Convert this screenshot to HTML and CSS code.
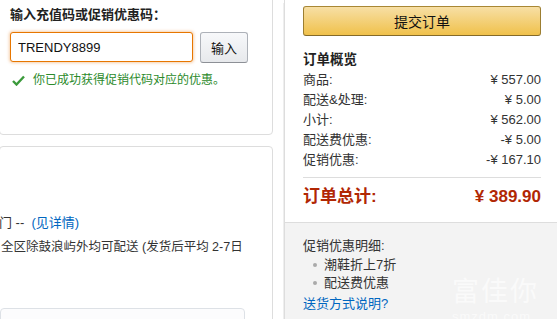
FILE: index.html
```html
<!DOCTYPE html>
<html lang="zh-CN">
<head>
  <meta charset="UTF-8" />
  <title>结算 - 提交订单</title>
  <link rel="stylesheet" href="styles.css">
</head>
<body>
  <div class="page">
    <div class="left-col">
      <div class="box promo-box">
        <div class="promo-title">输入充值码或促销优惠码：</div>
        <div class="promo-row">
          <input type="text" class="promo-input" value="TRENDY8899" />
          <button class="btn-grey">输入</button>
        </div>
        <div class="promo-ok">
          <svg class="check" width="13" height="11" viewBox="0 0 13 11">
            <path d="M1 6 L4.5 9.5 L12 1.5" fill="none" stroke="#3b9a3b" stroke-width="2.4" />
          </svg>
          你已成功获得促销代码对应的优惠。
        </div>
      </div>

      <div class="box ship-box">
        <div class="ship-line">厦门 -- &nbsp;<a href="#" class="link">(见详情)</a></div>
        <div class="ship-line ship-line2">全区除鼓浪屿外均可配送 (发货后平均 2-7日</div>
        <div class="inner-box"></div>
      </div>
    </div>

    <div class="right-col">
      <div class="summary">
        <button class="btn-submit">提交订单</button>
        <div class="sum-title">订单概览</div>
        <div class="sum-row"><span>商品:</span><span>¥ 557.00</span></div>
        <div class="sum-row"><span>配送&amp;处理:</span><span>¥ 5.00</span></div>
        <div class="sum-row"><span>小计:</span><span>¥ 562.00</span></div>
        <div class="sum-row"><span>配送费优惠:</span><span>-¥ 5.00</span></div>
        <div class="sum-row"><span>促销优惠:</span><span>-¥ 167.10</span></div>
        <div class="sum-total"><span>订单总计:</span><span>¥ 389.90</span></div>
      </div>
      <div class="promo-detail">
        <div>促销优惠明细:</div>
        <ul>
          <li>潮鞋折上7折</li>
          <li>配送费优惠</li>
        </ul>
        <a href="#" class="link">送货方式说明?</a>
        <div class="watermark">富佳你<small>smzdm.com</small></div>
      </div>
    </div>
  </div>
</body>
</html>
```

FILE: styles.css
```css
body {
  margin: 0;
  padding: 0;
  background-color: #ffffff;
  font-family: "Liberation Sans", "Noto Sans CJK SC", sans-serif;
  font-size: 13px;
  color: #333;
  overflow: hidden;
}

.page {
  display: flex;
  width: 580px;
}

.left-col {
  width: 274px;
  margin-left: -1px;
  margin-top: -1px;
  flex-shrink: 0;
}

.box {
  border: 1px solid #ddd;
  border-radius: 4px;
  background-color: #fff;
}

.promo-box {
  padding: 5px 10px 44px 10px;
  border-top-left-radius: 0;
  border-top-right-radius: 0;
}

.promo-title {
  font-weight: bold;
  line-height: 20px;
  color: #222;
}

.promo-row {
  display: flex;
  gap: 7px;
  margin-top: 7px;
}

.promo-input {
  width: 183px;
  height: 30px;
  box-sizing: border-box;
  border: 1px solid #e77600;
  border-radius: 3px;
  box-shadow: 0 0 3px 1px rgba(228, 121, 17, 0.35);
  padding: 0 7px;
  font-family: "Liberation Sans", sans-serif;
  font-size: 13px;
  color: #111;
  text-decoration: underline wavy #e03030;
  text-decoration-thickness: 1px;
  text-underline-offset: 3px;
  outline: none;
}

.btn-grey {
  width: 48px;
  height: 31px;
  border: 1px solid #adb1b8;
  border-bottom-color: #8d9096;
  border-radius: 3px;
  background: linear-gradient(#f7f8fa, #e7e9ec);
  font-family: "Liberation Sans", "Noto Sans CJK SC", sans-serif;
  font-size: 13px;
  color: #111;
  padding: 0;
}

.promo-ok {
  display: flex;
  align-items: center;
  gap: 8px;
  margin-top: 7px;
  padding-left: 2px;
  line-height: 20px;
  font-size: 12px;
  color: #2b8a2b;
}

.ship-box {
  margin-top: 11px;
  padding-top: 63px;
  height: 300px;
  overflow: hidden;
}

.ship-line {
  line-height: 25px;
  white-space: nowrap;
  margin-left: -14px;
  color: #333;
}

.ship-line2 {
  margin-left: 1px;
  font-size: 12.5px;
}

.link {
  color: #0066c0;
  text-decoration: none;
}

.inner-box {
  margin-top: 48px;
  width: 243px;
  height: 40px;
  border: 1px solid #dde1e6;
  border-radius: 4px;
  background-color: #fcfcfd;
}

.right-col {
  width: 274px;
  margin-left: 11px;
  border-left: 1px solid #ddd;
  box-shadow: -4px 0 0 -3px #eee;
  flex-shrink: 0;
  height: 330px;
  display: flex;
  flex-direction: column;
}

.summary {
  padding: 6px 18px 12px 18px;
}

.btn-submit {
  width: 100%;
  height: 30px;
  border: 1px solid #a88734;
  border-color: #a88734 #9c7e31 #846a29;
  border-radius: 3px;
  background: linear-gradient(#f7dfa5, #f0c14b);
  font-family: "Liberation Sans", "Noto Sans CJK SC", sans-serif;
  font-size: 14px;
  color: #111;
}

.sum-title {
  margin-top: 14px;
  line-height: 20px;
  font-weight: bold;
  font-size: 13.5px;
  color: #222;
}

.sum-row {
  display: flex;
  justify-content: space-between;
  line-height: 20px;
  color: #333;
}

.sum-total {
  display: flex;
  justify-content: space-between;
  margin-top: 7px;
  padding-top: 6px;
  border-top: 1px solid #ddd;
  line-height: 26px;
  font-size: 17px;
  font-weight: bold;
  color: #b12704;
}

.promo-detail {
  flex: 1;
  position: relative;
  background-color: #f3f3f3;
  border-top: 1px solid #ddd;
  padding: 13px 18px 0 18px;
  line-height: 20px;
  color: #333;
}

.promo-detail ul {
  margin: 0;
  padding-left: 21px;
  line-height: 18px;
}

.promo-detail li {
  list-style: none;
  position: relative;
}

.promo-detail li::before {
  content: "";
  position: absolute;
  left: -11px;
  top: 7px;
  width: 4px;
  height: 4px;
  border-radius: 50%;
  background-color: #aaa;
}

.promo-detail .link {
  display: block;
  margin-top: 2px;
}

.watermark {
  position: absolute;
  left: 167px;
  top: 52px;
  font-family: "Noto Sans CJK SC", sans-serif;
  font-size: 27px;
  letter-spacing: 2px;
  line-height: 30px;
  color: rgba(255, 255, 255, 0.6);
  pointer-events: none;
}

.watermark small {
  display: block;
  font-family: "Liberation Sans", sans-serif;
  font-size: 13px;
  letter-spacing: 1px;
  line-height: 16px;
  margin-top: 4px;
}
```
